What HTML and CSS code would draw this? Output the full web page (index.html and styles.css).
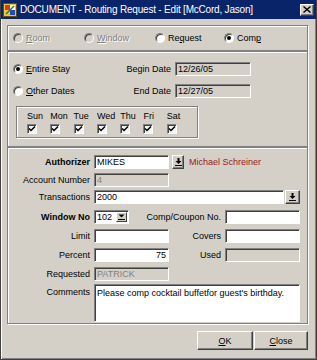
FILE: index.html
```html
<!DOCTYPE html>
<html>
    <head>
        <meta charset="utf-8">
        <link rel="stylesheet" href="styles.css">
    </head>
    <body>
        <div class="window">
            <div class="titlebar">
                <svg class="app-icon" width="14" height="14" viewBox="0 0 14 14">
                    <rect x="0.5" y="0.5" width="13" height="13" fill="#f4c430" stroke="#6a4a10"/>
                    <rect x="2" y="2" width="5" height="5" fill="#d83818"/>
                    <rect x="7" y="7" width="5" height="5" fill="#2048c8"/>
                    <rect x="7" y="2" width="5" height="5" fill="#ffffff"/>
                    <path d="M3 11 L11 3" stroke="#208030" stroke-width="1.5"/>
                </svg>
                <span class="title">DOCUMENT - Routing Request - Edit [McCord, Jason]</span>
                <span class="close-btn">
                    <svg width="8" height="7" viewBox="0 0 8 7"><path d="M0.5 0.5 L7.5 6.5 M7.5 0.5 L0.5 6.5" stroke="#000" stroke-width="1.4"/></svg>
                </span>
            </div>

            <div class="content">
                <!-- routing type -->
                <div class="panel type-panel">
                    <div class="opt disabled"><span class="radio"></span><span><u>R</u>oom</span></div>
                    <div class="opt disabled"><span class="radio"></span><span><u>W</u>indow</span></div>
                    <div class="opt"><span class="radio"></span><span>Re<u>q</u>uest</span></div>
                    <div class="opt"><span class="radio checked"></span><span>Com<u>p</u></span></div>
                </div>

                <!-- dates -->
                <div class="panel dates-panel">
                    <div class="dates-grid">
                        <div class="opt"><span class="radio checked"></span><span><u>E</u>ntire Stay</span></div>
                        <div class="lbl">Begin Date</div>
                        <div class="field disabled-dark">12/26/05</div>

                        <div class="opt"><span class="radio"></span><span><u>O</u>ther Dates</span></div>
                        <div class="lbl">End Date</div>
                        <div class="field disabled-dark">12/27/05</div>
                    </div>
                    <div class="days-box">
                        <div class="days-grid">
                            <span>Sun</span><span>Mon</span><span>Tue</span><span>Wed</span><span>Thu</span><span>Fri</span><span>Sat</span>
                            <span class="check"><svg width="8" height="8" viewBox="0 0 8 8"><path d="M1 3.5 L3 5.5 L7 1.5" fill="none" stroke="#000" stroke-width="1.5"/></svg></span>
                            <span class="check"><svg width="8" height="8" viewBox="0 0 8 8"><path d="M1 3.5 L3 5.5 L7 1.5" fill="none" stroke="#000" stroke-width="1.5"/></svg></span>
                            <span class="check"><svg width="8" height="8" viewBox="0 0 8 8"><path d="M1 3.5 L3 5.5 L7 1.5" fill="none" stroke="#000" stroke-width="1.5"/></svg></span>
                            <span class="check"><svg width="8" height="8" viewBox="0 0 8 8"><path d="M1 3.5 L3 5.5 L7 1.5" fill="none" stroke="#000" stroke-width="1.5"/></svg></span>
                            <span class="check"><svg width="8" height="8" viewBox="0 0 8 8"><path d="M1 3.5 L3 5.5 L7 1.5" fill="none" stroke="#000" stroke-width="1.5"/></svg></span>
                            <span class="check"><svg width="8" height="8" viewBox="0 0 8 8"><path d="M1 3.5 L3 5.5 L7 1.5" fill="none" stroke="#000" stroke-width="1.5"/></svg></span>
                            <span class="check"><svg width="8" height="8" viewBox="0 0 8 8"><path d="M1 3.5 L3 5.5 L7 1.5" fill="none" stroke="#000" stroke-width="1.5"/></svg></span>
                        </div>
                    </div>
                </div>

                <!-- details -->
                <div class="panel detail-panel">
                    <div class="detail-grid">
                        <div class="lbl bold">Authorizer</div>
                        <div class="auth-wrap">
                            <div class="field auth-field">MIKES</div>
                            <span class="drop-btn">
                                <svg width="7" height="8" viewBox="0 0 7 8"><path d="M2.5 0h2v3h2L3.5 6 0.5 3h2z" fill="#000"/><rect x="0" y="7" width="7" height="1" fill="#000"/></svg>
                            </span>
                            <span class="auth-name">Michael Schreiner</span>
                        </div>

                        <div class="lbl">Account Number</div>
                        <div class="field disabled">4</div>
                        <div></div><div></div>

                        <div class="lbl">Transactions</div>
                        <div class="combo">
                            <div class="field combo-field">2000</div>
                            <span class="drop-btn wide">
                                <svg width="7" height="8" viewBox="0 0 7 8"><path d="M2.5 0h2v3h2L3.5 6 0.5 3h2z" fill="#000"/><rect x="0" y="7" width="7" height="1" fill="#000"/></svg>
                            </span>
                        </div>

                        <div class="lbl bold">Window No</div>
                        <div class="field select-box">
                            <span>102</span>
                            <span class="select-btn">
                                <svg width="7" height="6" viewBox="0 0 7 6"><path d="M0.5 0.5h6L3.5 3.5z" fill="#000"/><rect x="0" y="5" width="7" height="1" fill="#000"/></svg>
                            </span>
                        </div>
                        <div class="lbl">Comp/Coupon No.</div>
                        <div class="field"></div>

                        <div class="lbl">Limit</div>
                        <div class="field"></div>
                        <div class="lbl">Covers</div>
                        <div class="field"></div>

                        <div class="lbl">Percent</div>
                        <div class="field num">75</div>
                        <div class="lbl">Used</div>
                        <div class="field disabled"></div>

                        <div class="lbl">Requested</div>
                        <div class="field disabled">PATRICK</div>
                        <div></div><div></div>

                        <div class="lbl top">Comments</div>
                        <div class="field comments">Please comp cocktail buffetfor guest's birthday.</div>
                    </div>
                </div>

                <div class="actions">
                    <span class="btn ok-btn"><u>O</u>K</span>
                    <span class="btn close-action"><u>C</u>lose</span>
                </div>
            </div>
        </div>
    </body>
</html>
```

FILE: styles.css
```css
/* classic grey dialog */
body{
    margin: 0;
    font-family: "Liberation Sans", Arial, sans-serif;
    font-size: 9px;
    color: #000000;
}
.window{
    width: 317px;
    height: 360px;
    box-sizing: border-box;
    background-color: #d4d0c8;
    border: 1px solid #404040;
    border-top: 0;
    box-shadow: inset 1px 0 0 #ffffff, inset -1px -1px 0 #808080;
}
.titlebar{
    height: 19px;
    background-color: #0a246a;
    display: flex;
    align-items: center;
    padding: 0 2px 0 2px;
}
.app-icon{
    flex: none;
    margin-right: 3px;
}
.title{
    flex: 1;
    color: #ffffff;
    font-size: 10px;
    letter-spacing: -0.2px;
    white-space: nowrap;
}
.close-btn{
    width: 14px;
    height: 12px;
    box-sizing: border-box;
    background-color: #d4d0c8;
    border: 1px solid;
    border-color: #ffffff #404040 #404040 #ffffff;
    box-shadow: inset -1px -1px 0 #808080;
    display: flex;
    align-items: center;
    justify-content: center;
}
.content{
    padding: 6px 8px 0 6px;
}
.panel{
    box-sizing: border-box;
    border: 1px solid #808080;
    box-shadow: inset 1px 1px 0 #ffffff, 1px 1px 0 #ffffff;
}
.type-panel{
    height: 26px;
    display: grid;
    grid-template-columns: 71px 71px 69px auto;
    align-items: center;
    padding-left: 5px;
}
.dates-panel{
    height: 96px;
    padding: 10px 0 0 5px;
}
.detail-panel{
    height: 177px;
    padding-top: 7px;
}
/* radios */
.opt{
    display: flex;
    align-items: center;
    gap: 3px;
    white-space: nowrap;
}
.opt.disabled{
    color: #808080;
    text-shadow: 1px 1px 0 #ffffff;
}
.radio{
    width: 10px;
    height: 10px;
    box-sizing: border-box;
    border-radius: 50%;
    border: 1px solid;
    border-color: #808080 #ffffff #ffffff #808080;
    box-shadow: inset 1px 1px 0 #404040;
    background-color: #ffffff;
    display: flex;
    align-items: center;
    justify-content: center;
}
.opt.disabled .radio{
    background-color: #d4d0c8;
}
.radio.checked::after{
    content: "";
    width: 4px;
    height: 4px;
    border-radius: 50%;
    background-color: #000000;
}
/* dates */
.dates-grid{
    display: grid;
    grid-template-columns: 103px 51px 76px;
    grid-auto-rows: 14px;
    column-gap: 4px;
    row-gap: 8px;
    align-items: center;
}
.days-box{
    width: 182px;
    height: 32px;
    box-sizing: border-box;
    margin: 8px 0 0 3px;
    border: 1px solid #808080;
    box-shadow: inset 1px 1px 0 #ffffff, 1px 1px 0 #ffffff;
    padding: 4px 0 0 10px;
}
.days-grid{
    display: grid;
    grid-template-columns: repeat(7, 23.3px);
    grid-template-rows: 11px 10px;
    row-gap: 2px;
    line-height: 11px;
}
.check{
    width: 10px;
    height: 10px;
    box-sizing: border-box;
    border: 1px solid;
    border-color: #808080 #ffffff #ffffff #808080;
    box-shadow: inset 1px 1px 0 #404040;
    background-color: #f4f4f4;
    display: flex;
    align-items: center;
    justify-content: center;
}
/* fields */
.lbl{
    display: flex;
    justify-content: flex-end;
    white-space: nowrap;
    line-height: 14px;
}
.lbl.bold{
    font-weight: bold;
}
.field{
    height: 14px;
    box-sizing: border-box;
    border: 1px solid;
    border-color: #808080 #ffffff #ffffff #808080;
    box-shadow: inset 1px 1px 0 #404040;
    background-color: #ffffff;
    padding: 0 2px;
    line-height: 12px;
    white-space: nowrap;
    overflow: hidden;
}
.field.disabled{
    background-color: #d4d0c8;
    color: #808080;
}
.field.disabled-dark{
    background-color: #d4d0c8;
}
.field.num{
    text-align: right;
}
.detail-grid{
    display: grid;
    grid-template-columns: 82px 75px 48px 75px;
    grid-template-rows: 18px 17px 20px 19px 19px 19px 17px 38px;
    column-gap: 4px;
    align-items: start;
}
.auth-wrap{
    grid-column: 2 / -1;
    display: flex;
    align-items: center;
}
.auth-field{
    width: 75px;
}
.auth-name{
    margin-left: 5px;
    color: #991a1a;
    white-space: nowrap;
}
.drop-btn{
    width: 12px;
    height: 14px;
    box-sizing: border-box;
    margin-left: 3px;
    background-color: #d4d0c8;
    border: 1px solid;
    border-color: #ffffff #404040 #404040 #ffffff;
    box-shadow: inset -1px -1px 0 #808080;
    display: flex;
    align-items: center;
    justify-content: center;
}
.drop-btn.wide{
    width: 15px;
    margin-left: 1px;
}
.combo{
    grid-column: 2 / -1;
    display: flex;
}
.combo-field{
    flex: 1;
}
.select-box{
    width: 35px;
    display: flex;
    align-items: center;
    justify-content: space-between;
    padding-right: 1px;
}
.select-btn{
    width: 11px;
    height: 10px;
    box-sizing: border-box;
    background-color: #d4d0c8;
    border: 1px solid;
    border-color: #ffffff #404040 #404040 #ffffff;
    display: flex;
    align-items: center;
    justify-content: center;
}
.lbl.top{
    line-height: 12px;
    padding-top: 2px;
}
.comments{
    grid-column: 2 / -1;
    height: 38px;
    padding-top: 2px;
}
/* buttons */
.actions{
    display: flex;
    justify-content: flex-end;
    gap: 1px;
    margin-top: 7px;
}
.btn{
    height: 19px;
    box-sizing: border-box;
    background-color: #d4d0c8;
    border: 1px solid;
    border-color: #ffffff #404040 #404040 #ffffff;
    box-shadow: inset -1px -1px 0 #808080;
    display: flex;
    align-items: center;
    justify-content: center;
}
.ok-btn{
    width: 56px;
}
.close-action{
    width: 54px;
}
```
